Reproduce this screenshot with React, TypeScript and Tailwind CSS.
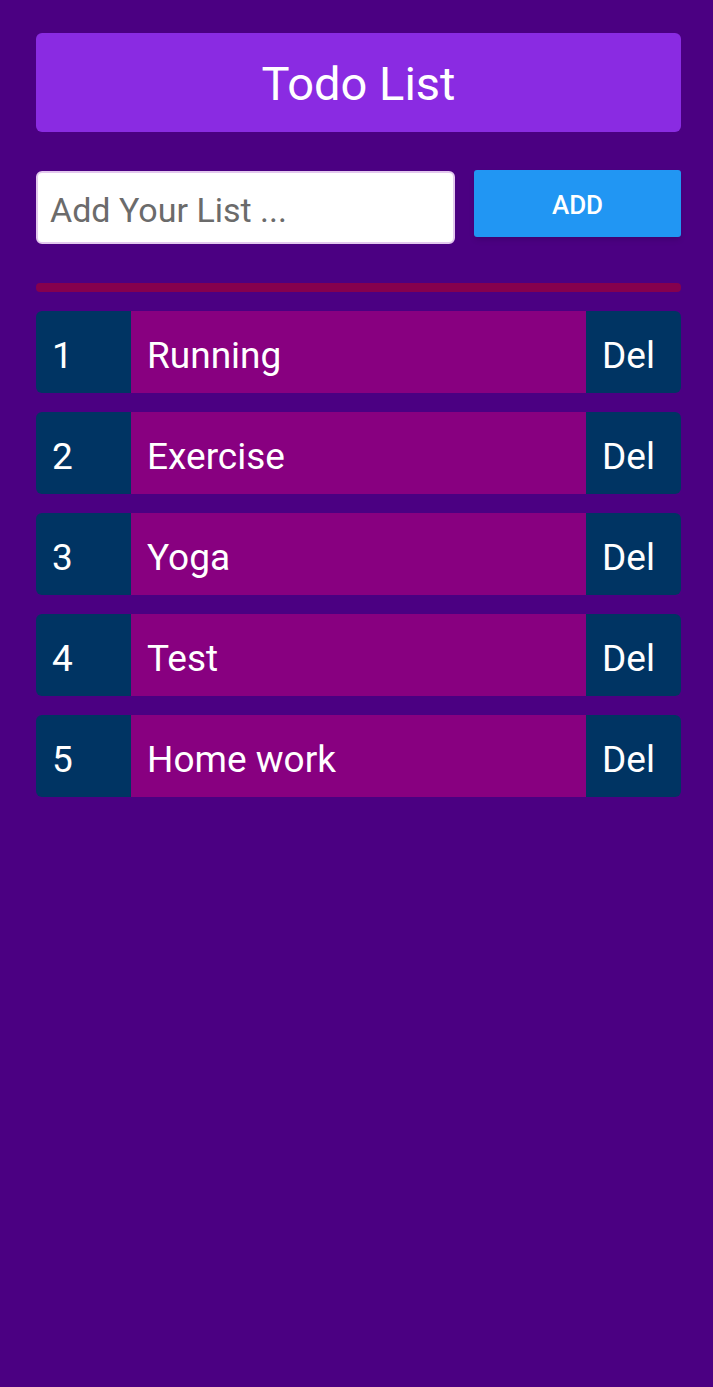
const todos = ["Running", "Exercise", "Yoga", "Test", "Home work"];

const App = () => {
  return (
    <div className="min-h-[1387px] w-full bg-[#4b0082] pl-9 pr-8 pt-[33px] font-['Roboto',sans-serif]">
      <div className="flex h-[99px] items-center justify-center rounded-md bg-[#8a2be2] pt-1">
        <h1 className="text-[47px] text-white">Todo List</h1>
      </div>

      <div className="mt-[39px] flex items-start justify-between">
        <input
          className="h-[73px] w-[419px] rounded-md border-2 border-[#e3c8ee] bg-white px-3 pt-1 text-[34px] text-[#555] placeholder:text-[#6b6b6b] focus:outline-none"
          placeholder="Add Your List ..."
        />
        <button className="-mt-px h-[67px] w-[207px] rounded-[3px] bg-[#2196f3] pt-1 text-[26px] font-medium text-white shadow-md">
          ADD
        </button>
      </div>

      <div className="mt-[39px] h-[9px] rounded-sm bg-[#85004e]" />

      <div className="mt-[19px] flex flex-col gap-[19px]">
        {todos.map((todo, i) => (
          <div key={todo} className="flex h-[82px] text-[37px] text-white">
            <div className="flex w-[95px] items-center rounded-l-md bg-[#003463] pl-4 pt-2">{i + 1}</div>
            <div className="flex flex-1 items-center bg-[#880080] pl-4 pt-2">{todo}</div>
            <div className="flex w-[95px] items-center rounded-r-md bg-[#003463] pl-4 pt-2">Del</div>
          </div>
        ))}
      </div>
    </div>
  );
};

export default App;
